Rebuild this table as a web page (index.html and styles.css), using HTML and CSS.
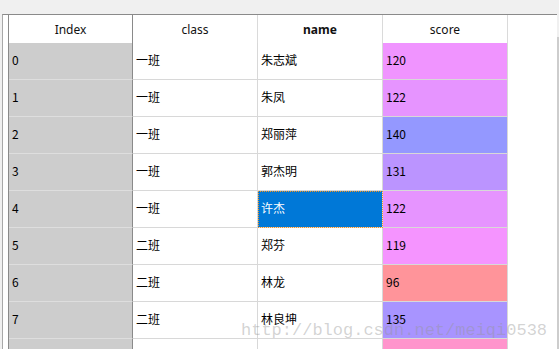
FILE: index.html
```html
<!DOCTYPE html>
<html>
<head>
<meta charset="utf-8">
<link rel="stylesheet" href="styles.css">
</head>
<body>
<div class="topbar"></div>
<div class="main">
  <div class="frame">
    <div class="gutter"></div>
    <div class="grid">
      <div class="hd hd-idx">Index</div>
      <div class="hd">class</div>
      <div class="hd hd-bold">name</div>
      <div class="hd">score</div>

      <div class="idx">0</div><div class="cell">一班</div><div class="cell">朱志斌</div><div class="cell sc s120">120</div>
      <div class="idx">1</div><div class="cell">一班</div><div class="cell">朱凤</div><div class="cell sc s122">122</div>
      <div class="idx">2</div><div class="cell">一班</div><div class="cell">郑丽萍</div><div class="cell sc s140">140</div>
      <div class="idx">3</div><div class="cell">一班</div><div class="cell">郭杰明</div><div class="cell sc s131">131</div>
      <div class="idx">4</div><div class="cell">一班</div><div class="cell sel">许杰</div><div class="cell sc s122">122</div>
      <div class="idx">5</div><div class="cell">二班</div><div class="cell">郑芬</div><div class="cell sc s119">119</div>
      <div class="idx">6</div><div class="cell">二班</div><div class="cell">林龙</div><div class="cell sc s96">96</div>
      <div class="idx">7</div><div class="cell">二班</div><div class="cell">林良坤</div><div class="cell sc s135">135</div>
      <div class="idx"></div><div class="cell"></div><div class="cell"></div><div class="cell sc s8"></div>
    </div>
    <div class="filler"></div>
  </div>
  <div class="scrollbar"><div class="thumb"></div></div>
</div>
<div class="watermark">http://blog.csdn.net/meiqi0538</div>
</body>
</html>
```

FILE: styles.css
```css
html, body {
  margin: 0;
  padding: 0;
}
body {
  width: 559px;
  height: 349px;
  overflow: hidden;
  background: #f0f0f0;
  position: relative;
  font-family: "Noto Sans CJK SC", "Noto Sans", sans-serif;
  font-size: 12px;
  color: #000;
}
.topbar {
  height: 14px;
}
.main {
  display: flex;
  height: 335px;
  overflow: hidden;
}
.frame {
  box-sizing: border-box;
  width: 555px;
  margin-left: 2px;
  border-top: 1px solid #8a8a8a;
  border-left: 1px solid #a8a8a8;
  background: #fff;
  display: flex;
  align-items: flex-start;
  overflow: hidden;
}
.gutter {
  width: 5px;
  flex: none;
  align-self: stretch;
  background: #fff;
}
.grid {
  flex: none;
  display: grid;
  grid-template-columns: 124px 125px 125px 125px;
  grid-template-rows: 28px repeat(9, 37px);
  border-left: 1px solid #8a8a8a;
}
.grid > div {
  box-sizing: border-box;
  display: flex;
  align-items: center;
  white-space: nowrap;
  overflow: hidden;
}
.hd {
  justify-content: center;
  font-family: "Noto Sans", sans-serif;
  font-size: 12px;
  color: #111;
  background: #fff;
  border-right: 1px solid #dadada;
}
.hd-idx {
  border-right: 1px solid #8a8a8a;
}
.hd-bold {
  font-weight: bold;
}
.idx {
  background: #cdcdcd;
  border-right: 1px solid #8a8a8a;
  border-bottom: 1px solid #dedede;
  padding: 0 0 4px 3px;
}
.cell {
  background: #fff;
  border-right: 1px solid #d8d8d8;
  border-bottom: 1px solid #d8d8d8;
  padding: 0 0 4px 3px;
}
.sel {
  background: #0078d7;
  color: #fff;
  outline: 1px dotted #f7941d;
  outline-offset: -1px;
}
.s120 { background: #f094ff; }
.s122 { background: #e694ff; }
.s140 { background: #9498ff; }
.s131 { background: #bb94ff; }
.s119 { background: #f594ff; }
.s96  { background: #ff949a; }
.s135 { background: #a894ff; }
.s8   { background: #ff94cc; }
.filler {
  flex: 1;
  align-self: stretch;
  background: #fff;
}
.scrollbar {
  flex: 1;
  background: #f0f0f0;
  padding-top: 23px;
  display: flex;
  flex-direction: column;
}
.thumb {
  flex: 1;
  background: #cdcdcd;
}
.watermark {
  position: absolute;
  left: 241px;
  top: 321px;
  font-family: "Liberation Mono", monospace;
  font-size: 17px;
  line-height: 19px;
  color: rgba(150, 150, 150, 0.42);
  white-space: nowrap;
}
```
